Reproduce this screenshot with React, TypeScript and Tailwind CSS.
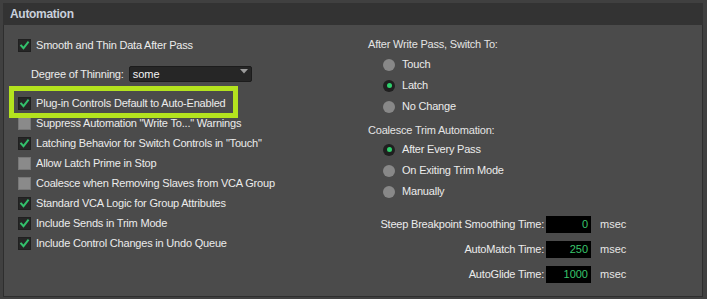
import React from "react";

const font = { fontFamily: '"Liberation Sans", Arial, sans-serif' };

function Check({ checked }: { checked: boolean }) {
  return (
    <div
      className={
        "w-[13px] h-[13px] shrink-0 flex items-center justify-center border " +
        (checked ? "bg-[#262626] border-[#202020]" : "bg-[#8a8a8a] border-[#777777]")
      }
    >
      {checked && (
        <svg width="13" height="13" viewBox="0 0 13 13">
          <polyline
            points="2.5,6.5 5.3,9.6 10.6,2.8"
            fill="none"
            stroke="#33c06c"
            strokeWidth="2.3"
            strokeLinecap="square"
          />
        </svg>
      )}
    </div>
  );
}

function CheckRow({ label, checked }: { label: string; checked: boolean }) {
  return (
    <div className="h-[20px] flex items-center gap-[5px]">
      <Check checked={checked} />
      <span className="text-[11px] tracking-[-0.2px] text-[#ececec] whitespace-nowrap">{label}</span>
    </div>
  );
}

function Radio({ label, selected }: { label: string; selected: boolean }) {
  return (
    <div className="h-[21px] flex items-center pl-[15px] gap-[7px]">
      {selected ? (
        <div className="w-[12px] h-[12px] rounded-full bg-[#1f1f1f] flex items-center justify-center">
          <div className="w-[5px] h-[5px] rounded-full bg-[#2fcf6c]" />
        </div>
      ) : (
        <div className="w-[12px] h-[12px] rounded-full bg-[#888888]" />
      )}
      <span className="text-[11px] tracking-[-0.2px] text-[#ececec] whitespace-nowrap">{label}</span>
    </div>
  );
}

function TimeRow({ label, value }: { label: string; value: string }) {
  return (
    <div className="h-[17px] flex items-center">
      <span className="w-[176px] text-right text-[11px] tracking-[-0.2px] text-[#ececec] whitespace-nowrap">
        {label}
      </span>
      <div className="ml-[2px] w-[45px] h-[17px] bg-black flex items-center justify-end pr-[3px]">
        <span className="text-[11px] text-[#38c56c]">{value}</span>
      </div>
      <span className="ml-[9px] text-[11px] text-[#e6e6e6]">msec</span>
    </div>
  );
}

export default function App() {
  return (
    <div className="relative w-[707px] h-[299px] bg-[#404040] p-[3px]" style={font}>
      <div className="w-[700px] h-[294px] flex flex-col">
        <div className="h-[22px] bg-[#333333] flex items-center pl-[7px]">
          <span className="text-[12px] font-bold tracking-[-0.3px] text-[#c8d0dc]">Automation</span>
        </div>
        <div className="flex-1 bg-[#4b4b4b] border-x border-b border-[#2e2e2e] flex pl-[14px] pt-[10px]">
          <div className="w-[350px] flex flex-col">
            <CheckRow label="Smooth and Thin Data After Pass" checked />
            <div className="mt-[9px] h-[20px] flex items-center pl-[13px]">
              <span className="text-[11px] tracking-[-0.2px] text-[#ececec]">Degree of Thinning:</span>
              <div className="ml-[5px] w-[123px] h-[16px] bg-[#262626] border border-[#1c1c1c] rounded-[2px] flex items-center justify-between pl-[3px] pr-[3px]">
                <span className="text-[11px] text-[#f4f4f4]">some</span>
                <svg width="8" height="5" viewBox="0 0 8 5" className="-mt-[6px]">
                  <polygon points="0,0 8,0 4,4.5" fill="#9c9c9c" />
                </svg>
              </div>
            </div>
            <div className="mt-[9px]">
              <CheckRow label="Plug-in Controls Default to Auto-Enabled" checked />
              <CheckRow label={'Suppress Automation "Write To..." Warnings'} checked={false} />
              <CheckRow label={'Latching Behavior for Switch Controls in "Touch"'} checked />
              <CheckRow label="Allow Latch Prime in Stop" checked={false} />
              <CheckRow label="Coalesce when Removing Slaves from VCA Group" checked={false} />
              <CheckRow label="Standard VCA Logic for Group Attributes" checked />
              <CheckRow label="Include Sends in Trim Mode" checked />
              <CheckRow label="Include Control Changes in Undo Queue" checked />
            </div>
          </div>
          <div className="flex-1 flex flex-col">
            <div className="h-[19px] flex items-center text-[11px] tracking-[-0.2px] text-[#e4e4e4]">
              After Write Pass, Switch To:
            </div>
            <Radio label="Touch" selected={false} />
            <Radio label="Latch" selected />
            <Radio label="No Change" selected={false} />
            <div className="mt-[4px] h-[18px] flex items-center text-[11px] tracking-[-0.2px] text-[#e4e4e4]">
              Coalesce Trim Automation:
            </div>
            <Radio label="After Every Pass" selected />
            <Radio label="On Exiting Trim Mode" selected={false} />
            <Radio label="Manually" selected={false} />
            <div className="mt-[14px] flex flex-col gap-[8px]">
              <TimeRow label="Steep Breakpoint Smoothing Time:" value="0" />
              <TimeRow label="AutoMatch Time:" value="250" />
              <TimeRow label="AutoGlide Time:" value="1000" />
            </div>
          </div>
        </div>
      </div>
      <div className="absolute left-[9px] top-[86px] w-[229px] h-[32px] border-[5px] border-[#b4e31e]" />
    </div>
  );
}
